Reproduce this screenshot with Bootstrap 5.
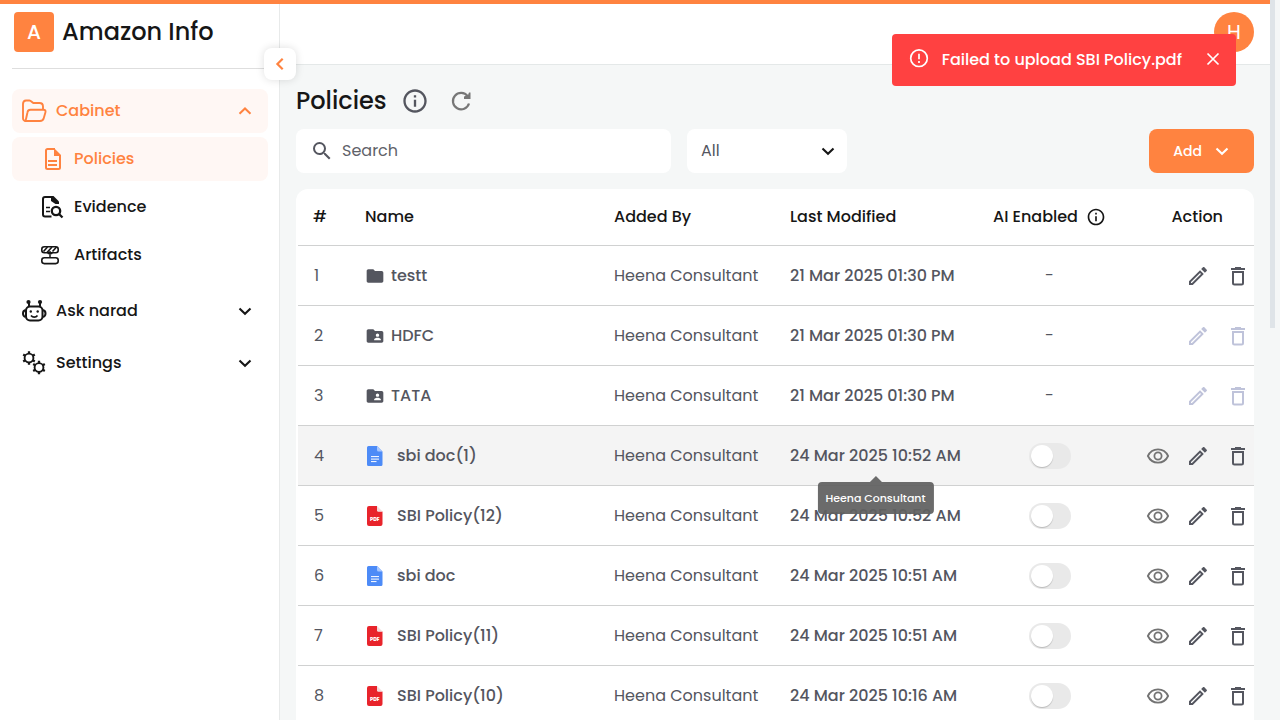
<!DOCTYPE html>
<html lang="en">
<head>
<meta charset="utf-8">
<meta name="viewport" content="width=device-width, initial-scale=1">
<title>Policies – Amazon Info</title>
<link href="https://cdn.jsdelivr.net/npm/bootstrap@5.3.0/dist/css/bootstrap.min.css" rel="stylesheet">
<style>
:root{--brand:#ff8340;--ink:#161616;--slate:#54565f}
body{font-family:Poppins,Inter,"Open Sans",sans-serif;font-size:16px;color:var(--ink);background:#f5f7f7}
svg{display:block;flex:none}
.app-shell{min-height:100vh;border-top:4px solid var(--brand)}
.viewport-box{height:100vh;overflow:hidden}
.side-panel{position:relative;flex:0 0 280px;background:#fff;border-right:1px solid #e8eaea;padding:8px 11px 8px 12px}
.logo-tile{width:40px;height:40px;background:var(--brand);border-radius:4px;font-size:20px;margin-left:2px}
.brand-name{font-size:24px;line-height:40px;font-weight:500}
.brand-row{padding-bottom:16px;border-bottom:1px solid #dedede;margin-bottom:20px}
.side-link{height:44px;border-radius:8px;padding:0 11px 0 8px;color:var(--ink);font-weight:500;text-decoration:none;gap:8px}
.side-link.on{color:var(--brand);background:#fff7f4}
.side-link.sub{padding-left:28px}
.side-group{margin-top:12px}
.collapse-btn{position:absolute;left:264px;top:44px;width:32px;height:32px;border:0;border-radius:8px;background:#fff;color:var(--brand);box-shadow:0 0 8px #0002;z-index:3;padding:4px}
.top-strip{height:61px;background:#fff;border-bottom:1px solid #e4e8e8;padding:8px 26px}
.avatar{width:40px;height:40px;background:var(--brand);font-size:20px}
.work{padding:16px 26px 0 16px}
.page-title{font-size:24px;line-height:40px;font-weight:500}
.title-row{gap:14px}
.title-row .plain-btn + .plain-btn{margin-left:6px}
.plain-btn{border:0;background:none;padding:0;color:var(--slate)}
.plain-btn:disabled{color:#bfc3da}
.search-box{flex:0 1 375px;min-width:0;height:44px;background:#fff;border-radius:8px;padding:0 14px;color:var(--slate)}
.search-box input{border:0;outline:0;background:none;min-width:0;padding:0}
.search-box input::placeholder{color:#606269}
.filter-box{position:relative;width:160px;height:44px}
.filter-box select{appearance:none;width:100%;height:100%;border:0;border-radius:8px;background:#fff;color:var(--slate);padding:0 14px}
.filter-box svg{position:absolute;right:7px;top:10px;color:var(--ink);pointer-events:none}
.add-btn,.add-btn:hover{height:44px;background:var(--brand);color:#fff;border:0;border-radius:8px;font-size:14px;font-weight:500;padding:0 20px 0 24px}
.sheet{background:#fff;border-radius:12px 12px 0 0;padding-left:2px}
.doc-table{width:100%;table-layout:fixed;border-collapse:separate;border-spacing:0;color:var(--slate);white-space:nowrap}
.doc-table th{height:56px;color:var(--ink);font-weight:500;padding:0 0 0 16px}
.doc-table th:first-child{padding-left:15px}
.doc-table td{height:60px;border-top:1px solid #d0d1d1;padding:0 0 0 16px}
.doc-table tr.hot td{background:#f4f4f4}
.doc-table .mid-col{padding:0;text-align:center}
.doc-table .act-head{padding:0 31px 0 0;text-align:right}
.doc-table .act-col{padding:0 4px 0 0}
.folder-name{gap:6px}
.file-name{gap:14px;padding-left:2px}
.med{font-weight:500}
.ai-switch{appearance:none;display:block;width:42px;height:26px;border-radius:13px;background:#e9e9e9;margin:0 auto;padding:2px}
.ai-switch:before{content:"";display:block;width:22px;height:22px;border-radius:50%;background:#fff;box-shadow:0 1px 1px #0003}
.tip{position:absolute;left:50%;top:calc(100% - 3px);transform:translateX(-50%);height:32px;line-height:32px;padding:0 8px;border-radius:4px;background:#606060ee;color:#fff;font-size:11px;font-weight:500;z-index:2}
.tip:before{content:"";position:absolute;left:50%;top:-6px;margin-left:-6px;border:6px solid transparent;border-top:0;border-bottom-color:#606060ee}
.fail-toast{position:absolute;right:44px;top:34px;height:52px;background:#ff4141;color:#fff;border-radius:4px;padding:0 12px 0 16px;font-weight:500;z-index:5}
.fail-toast button{color:#fff;margin-left:20px}
.pdf-tag{font-size:5px;font-weight:800;fill:#fff}
.scroll-gutter{position:absolute;right:0;top:0;width:10px;height:100%;background:#f5f7f7;z-index:5}
.scroll-gutter span{display:block;width:5px;height:328px;background:#dfe4e8}
</style>
</head>
<body>
<svg width="0" height="0" class="position-absolute" aria-hidden="true">
<symbol id="i-chev" viewBox="0 0 24 24"><path d="M6.500 9.500l5.500 5.300 5.500-5.300" fill="none" stroke="currentColor" stroke-width="2.100"/></symbol>
<symbol id="i-info" viewBox="0 0 24 24"><path fill="currentColor" d="M11 7h2v2h-2zm0 4h2v6h-2zm1-9C6.480 2 2 6.480 2 12s4.480 10 10 10 10-4.480 10-10S17.520 2 12 2zm0 18c-4.410 0-8-3.590-8-8s3.590-8 8-8 8 3.590 8 8-3.590 8-8 8z"/></symbol>
<symbol id="i-pen" viewBox="0 0 24 24"><path fill="currentColor" d="M14.060 9.020l.92.92L5.920 19H5v-.92l9.060-9.060M17.660 3c-.25 0-.51.1-.7.290l-1.830 1.830 3.750 3.750 1.830-1.830c.39-.39.39-1.020 0-1.410l-2.340-2.340c-.2-.2-.45-.290-.71-.290zm-3.600 3.190L3 17.250V21h3.750L17.810 9.940l-3.750-3.750z"/></symbol>
<symbol id="i-bin" viewBox="0 0 24 24"><path d="M5 5h14M9 4h6M7 8h10v11a1.500 1.500 0 0 1-1.500 1.500h-7A1.500 1.500 0 0 1 7 19z" fill="none" stroke="currentColor" stroke-width="2"/></symbol>
<symbol id="i-eye" viewBox="0 0 24 24"><g fill="none" stroke="#737373" stroke-width="1.800"><path d="M1.900 12C4 7.500 7.700 5.400 12 5.400S20 7.500 22.100 12C20 16.500 16.300 18.600 12 18.600S4 16.500 1.900 12z"/><circle cx="12" cy="12" r="3.600"/></g></symbol>
<symbol id="i-folder" viewBox="0 0 24 24"><path fill="currentColor" d="M10 4H4c-1.100 0-2 .9-2 2v12c0 1.100.9 2 2 2h16c1.100 0 2-.9 2-2V8c0-1.100-.9-2-2-2h-8z"/></symbol>
<symbol id="i-shared" viewBox="0 0 24 24"><path fill="currentColor" d="M20 6h-8l-2-2H4c-1.100 0-2 .9-2 2v12c0 1.100.9 2 2 2h16c1.100 0 2-.9 2-2V8c0-1.100-.9-2-2-2zm-5 3c1.100 0 2 .9 2 2s-.9 2-2 2-2-.9-2-2 .9-2 2-2zm4 8h-8v-1c0-1.330 2.670-2 4-2s4 .67 4 2z"/></symbol>
</svg>

<div class="viewport-box position-relative">
<div class="app-shell d-flex position-relative">
  <aside class="side-panel">
    <div class="brand-row d-flex align-items-center gap-2">
      <div class="logo-tile d-flex align-items-center justify-content-center text-white med">A</div>
      <div class="brand-name text-nowrap">Amazon Info</div>
    </div>
    <nav class="d-flex flex-column">
      <a href="#" class="side-link on d-flex align-items-center mb-1">
        <svg width="28" height="26" viewBox="0 0 28 26" fill="none" stroke="currentColor" stroke-width="1.900" stroke-linejoin="round"><path d="M5.500 23C3.700 23 3 21.500 3 20V6c0-2.500 1-3.500 3-3.500h3.500c1.500 0 2.500 2 4 2.500h6c2.500 0 3.500 1.500 3.500 3.500v3.200"/><path d="M5 23h15c2 0 3.300-1 3.800-3l1.600-5.500c.5-1.800-.2-2.800-2-2.800H10.500c-1.800 0-2.700.8-3 2.500L6 21c-.3 1.300-.6 2-1.500 2"/></svg>
        <span class="flex-grow-1">Cabinet</span>
        <svg width="24" height="24" viewBox="0 0 24 24"><path d="M6.500 14.800L12 9.500l5.500 5.300" fill="none" stroke="currentColor" stroke-width="2"/></svg>
      </a>
      <a href="#" class="side-link sub on d-flex align-items-center mb-1">
        <svg width="26" height="26" viewBox="0 0 26 26"><path d="M15 3H7.500A1.500 1.500 0 0 0 6 4.500v17A1.500 1.500 0 0 0 7.500 23h11a1.500 1.500 0 0 0 1.500-1.500V9M8 15h9M8 19h9" fill="none" stroke="currentColor" stroke-width="2"/><path fill="currentColor" d="M14 2l7 7v1h-7z"/></svg>
        <span>Policies</span>
      </a>
      <a href="#" class="side-link sub d-flex align-items-center mb-1">
        <svg width="26" height="26" viewBox="0 0 26 26" fill="none" stroke="currentColor"><path stroke-width="2" d="M11.500 22.500H5A2 2 0 0 1 3 20.500V5a2 2 0 0 1 2-2h7"/><path fill="currentColor" stroke="none" d="M11 2h2.500l5.500 5.500V10h-3.500L11 7z"/><path stroke-width="1.700" d="M6 13.500h4M6 17.500h4"/><circle cx="16" cy="17" r="4.200" stroke-width="2.300"/><path stroke-width="2.300" d="M19 20l3.500 3.500"/></svg>
        <span>Evidence</span>
      </a>
      <a href="#" class="side-link sub d-flex align-items-center">
        <svg width="26" height="26" viewBox="0 0 26 26" fill="none" stroke="currentColor" stroke-width="1.600"><rect x="1.800" y="4.800" width="16.400" height="6" rx="2.500"/><path d="M3.500 9.500l4-4.500M7 10.500l5-5.500M12.500 9.500l4-4.500"/><path d="M10 16v-6M7.800 12l2.200-2.200 2.200 2.200" stroke-width="1.500"/><rect x="1.800" y="15.800" width="16.400" height="5.800" rx="2.500"/></svg>
        <span>Artifacts</span>
      </a>
      <a href="#" class="side-link side-group d-flex align-items-center">
        <svg width="28" height="26" viewBox="0 0 28 26" fill="none" stroke="currentColor" stroke-width="2"><rect x="6" y="8.500" width="16.500" height="14" rx="4"/><path d="M5.500 12C3.800 12.500 3 13.500 3 15.500s.8 3 2.500 3.500M23 12c1.700.5 2.500 1.500 2.500 3.500s-.8 3-2.500 3.500M9 8V4M20 8V4"/><path d="M11 17.500c1.800 2.200 4.800 2.200 6.500 0" stroke-width="1.800"/><g fill="currentColor" stroke="none"><circle cx="8.500" cy="4" r="2.100"/><circle cx="20" cy="4" r="2.100"/><circle cx="10.800" cy="13.500" r="1.200"/><circle cx="17.700" cy="13.500" r="1.200"/></g></svg>
        <span class="flex-grow-1">Ask narad</span>
        <svg width="24" height="24"><use href="#i-chev"/></svg>
      </a>
      <a href="#" class="side-link d-flex align-items-center mt-2">
        <svg width="28" height="28" viewBox="0 0 28 28" fill="none" stroke="currentColor"><g id="gear"><circle cx="9" cy="9" r="4.400" stroke-width="1.900"/><path stroke-width="2.300" d="M9 4.500V2.200M9 13.500v2.300M5.100 6.700L3.200 5.600M12.900 6.700l1.900-1.100M5.100 11.300l-1.900 1.100M12.900 11.300l1.900 1.100"/></g><use href="#gear" x="10" y="9.500"/></svg>
        <span class="flex-grow-1">Settings</span>
        <svg width="24" height="24"><use href="#i-chev"/></svg>
      </a>
    </nav>
    <button class="collapse-btn" aria-label="Collapse sidebar"><svg width="24" height="24" viewBox="0 0 24 24"><path d="M14.700 6.700L9.400 12l5.300 5.300" fill="none" stroke="currentColor" stroke-width="2.200"/></svg></button>
  </aside>

  <main class="flex-grow-1">
    <header class="top-strip d-flex justify-content-end">
      <div class="avatar rounded-circle d-flex align-items-center justify-content-center text-white">H</div>
    </header>
    <section class="work">
      <div class="title-row d-flex align-items-center">
        <h1 class="page-title m-0">Policies</h1>
        <button class="plain-btn" aria-label="About policies"><svg width="28" height="28"><use href="#i-info"/></svg></button>
        <button class="plain-btn" aria-label="Refresh"><svg width="24" height="24" viewBox="0 0 24 24"><path d="M18.700 7.200A8.200 8.200 0 1 0 20 14.500" fill="none" stroke="#777" stroke-width="2.200"/><path fill="#777" d="M21.500 3.500V10H15V7.500l4-1.500 1-2.500z"/></svg></button>
      </div>
      <div class="d-flex gap-3 mt-2 mb-3">
        <label class="search-box d-flex align-items-center gap-2">
          <svg width="24" height="24" viewBox="0 0 24 24"><path fill="currentColor" d="M15.500 14h-.79l-.28-.27A6.470 6.470 0 0 0 16 9.500 6.500 6.500 0 1 0 9.500 16c1.610 0 3.090-.59 4.230-1.570l.27.28v.79l5 4.990L20.490 19l-4.990-5zm-6 0C7.010 14 5 11.990 5 9.500S7.010 5 9.500 5 14 7.010 14 9.500 11.990 14 9.500 14z"/></svg>
          <input type="search" class="flex-grow-1" placeholder="Search" aria-label="Search">
        </label>
        <div class="filter-box">
          <select aria-label="Filter"><option>All</option></select>
          <svg width="24" height="24"><use href="#i-chev"/></svg>
        </div>
        <button class="btn add-btn d-flex align-items-center gap-2 ms-auto">Add <svg width="24" height="24"><use href="#i-chev"/></svg></button>
      </div>

      <div class="sheet">
        <table class="doc-table">
          <colgroup><col style="width:51px"><col><col style="width:176px"><col style="width:203px"><col style="width:145px"><col style="width:132px"></colgroup>
          <thead><tr><th>#</th><th>Name</th><th>Added By</th><th>Last Modified</th>
            <th class="mid-col"><span class="d-flex align-items-center justify-content-center gap-2">AI Enabled <svg width="20" height="20"><use href="#i-info"/></svg></span></th>
            <th class="act-head">Action</th></tr></thead>
          <tbody id="rows"></tbody>
        </table>
      </div>
    </section>
  </main>
</div>
<div class="scroll-gutter"><span></span></div>
<div class="fail-toast d-flex align-items-center" role="alert">
  <svg width="22" height="22" viewBox="0 0 22 22" fill="none" stroke="#fff" stroke-width="1.700"><circle cx="11" cy="9.200" r="8.300"/><path d="M11 4.700v5.500M11 11.900v2"/></svg>
  <span class="text-nowrap ms-2 ps-1">Failed to upload SBI Policy.pdf</span>
  <button class="plain-btn" aria-label="Close"><svg width="22" height="22" viewBox="0 0 22 22"><path d="M5.500 4.500l11 11m0-11l-11 11" stroke="#fff" stroke-width="1.700"/></svg></button>
</div>
</div>

<script>
const files = [
  ['folder', 'testt', '21 Mar 2025 01:30 PM'],
  ['shared', 'HDFC', '21 Mar 2025 01:30 PM'],
  ['shared', 'TATA', '21 Mar 2025 01:30 PM'],
  ['doc', 'sbi doc(1)', '24 Mar 2025 10:52 AM', 'Heena Consultant'],
  ['pdf', 'SBI Policy(12)', '24 Mar 2025 10:52 AM'],
  ['doc', 'sbi doc', '24 Mar 2025 10:51 AM'],
  ['pdf', 'SBI Policy(11)', '24 Mar 2025 10:51 AM'],
  ['pdf', 'SBI Policy(10)', '24 Mar 2025 10:16 AM']
];
const kindIcon = {
  folder: '<svg width="20" height="20"><use href="#i-folder"/></svg>',
  shared: '<svg width="20" height="20"><use href="#i-shared"/></svg>',
  doc: '<svg width="16" height="20" viewBox="0 0 16 20"><path fill="#4d8bf7" d="M1.500 0H10l5.500 5.500v13a1.500 1.500 0 0 1-1.500 1.500H1.500A1.500 1.500 0 0 1 0 18.500v-17A1.500 1.500 0 0 1 1.500 0z"/><path fill="#a9c8ff" d="M10 0l5.500 5.500H11.500A1.500 1.500 0 0 1 10 4z"/><path d="M4 10.600h8M4 13.100h8M4 15.600h5.500" stroke="#fff" stroke-width="1"/></svg>',
  pdf: '<svg width="16" height="20" viewBox="0 0 16 20"><path fill="#e8242b" d="M2 0h8v4a1.500 1.500 0 0 0 1.500 1.500h4V18a2 2 0 0 1-2 2H2a2 2 0 0 1-2-2V2a2 2 0 0 1 2-2z"/><path fill="#f4dada" d="M10 0l5.500 5.500H11.500A1.500 1.500 0 0 1 10 4z"/><text class="pdf-tag" x="7.800" y="14.600" text-anchor="middle">PDF</text></svg>'
};
const action = (icon, label, locked) =>
  `<button class="plain-btn" aria-label="${label}" ${locked ? 'disabled' : ''}><svg width="24" height="24"><use href="#i-${icon}"/></svg></button>`;
document.getElementById('rows').innerHTML = files.map(([kind, name, date, tip], i) => {
  const isFile = kind === 'doc' || kind === 'pdf', locked = kind === 'shared';
  return `<tr class="${tip ? 'hot' : ''}">
    <td>${i + 1}</td>
    <td class="med"><span class="d-flex align-items-center ${isFile ? 'file-name' : 'folder-name'}">${kindIcon[kind]}<span>${name}</span></span></td>
    <td>Heena Consultant</td>
    <td class="med position-relative">${date}${tip ? `<span class="tip" role="tooltip">${tip}</span>` : ''}</td>
    <td class="mid-col">${isFile ? `<input type="checkbox" role="switch" class="ai-switch" aria-label="AI enabled for ${name}">` : '-'}</td>
    <td class="act-col"><span class="d-flex justify-content-end gap-3">${isFile ? action('eye', 'View') : ''}${action('pen', 'Edit', locked)}${action('bin', 'Delete', locked)}</span></td>
  </tr>`;
}).join('');
</script>
<script src="https://cdn.jsdelivr.net/npm/bootstrap@5.3.0/dist/js/bootstrap.bundle.min.js"></script>
</body>
</html>
